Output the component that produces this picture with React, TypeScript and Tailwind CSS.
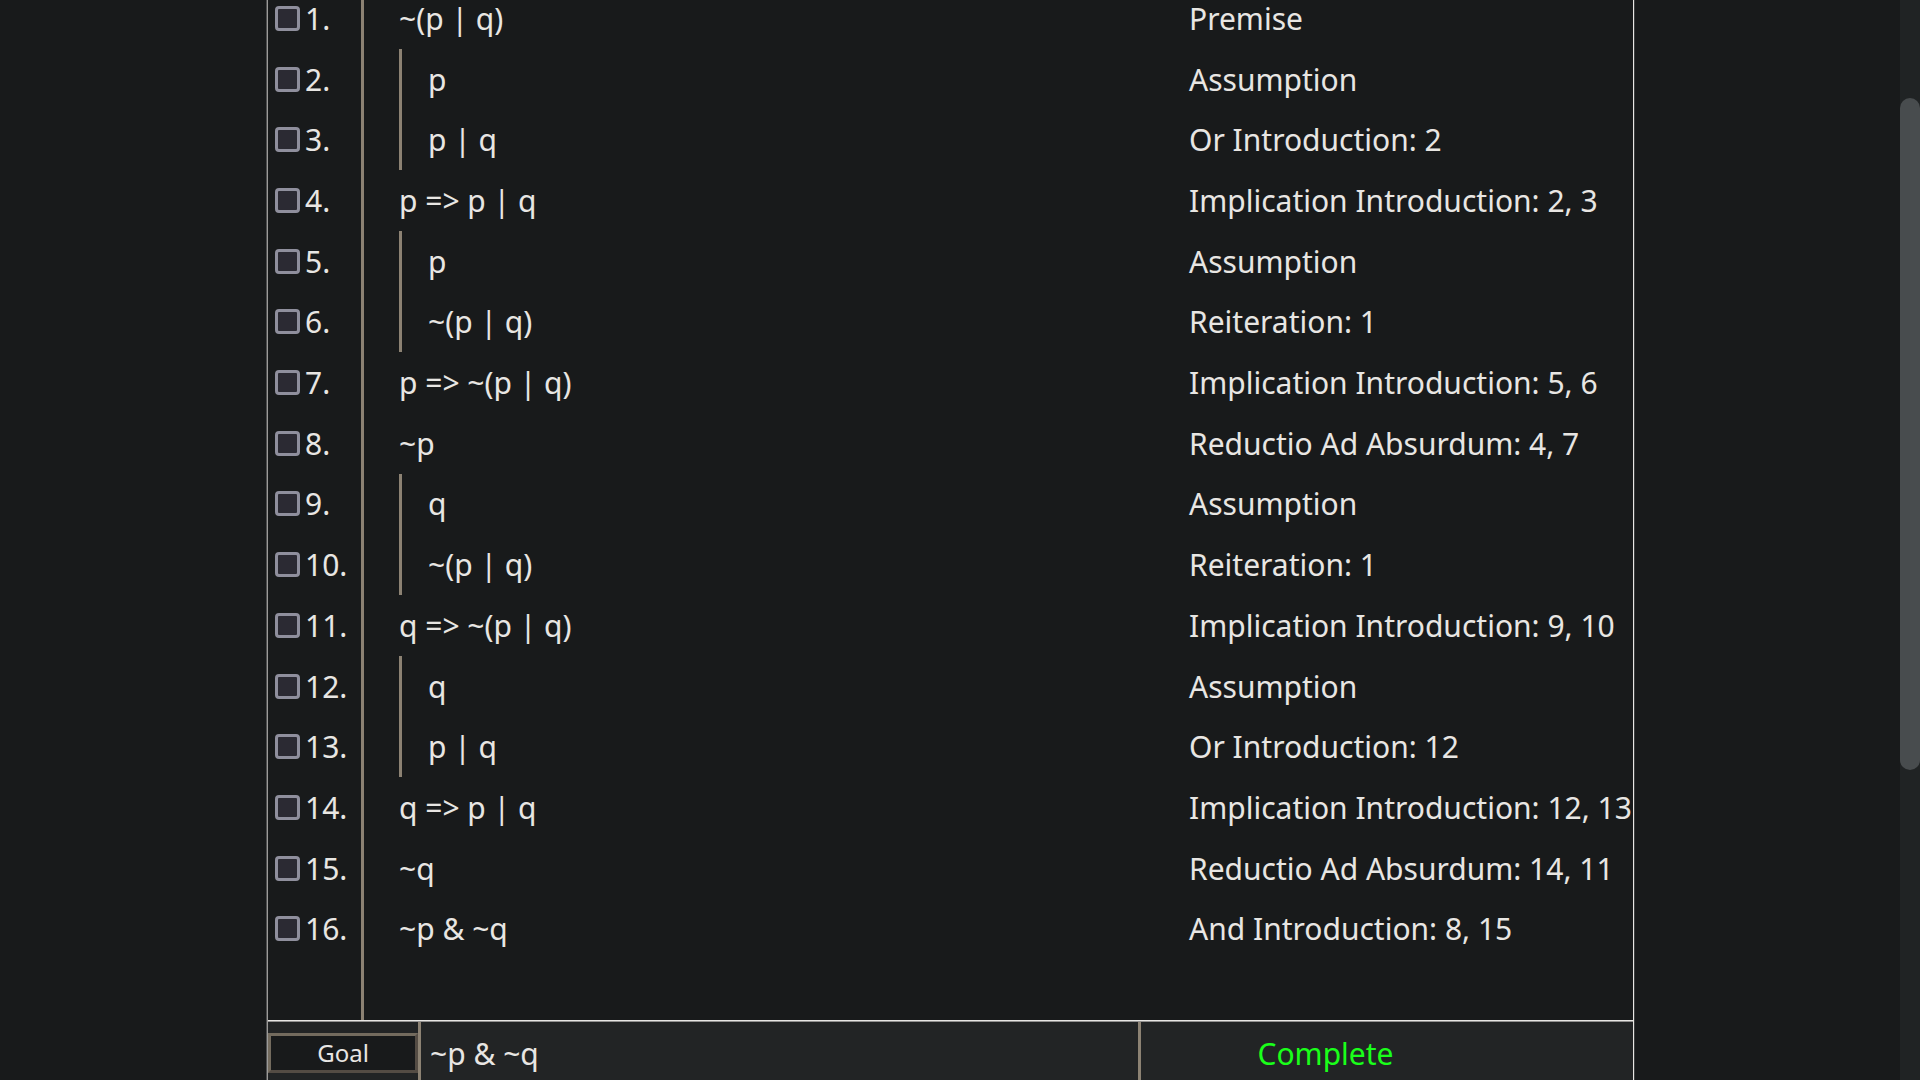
type Step = { formula: string; depth: 0 | 1; reason: string };

const steps: Step[] = [
  { formula: "~(p | q)", depth: 0, reason: "Premise" },
  { formula: "p", depth: 1, reason: "Assumption" },
  { formula: "p | q", depth: 1, reason: "Or Introduction: 2" },
  { formula: "p => p | q", depth: 0, reason: "Implication Introduction: 2, 3" },
  { formula: "p", depth: 1, reason: "Assumption" },
  { formula: "~(p | q)", depth: 1, reason: "Reiteration: 1" },
  { formula: "p => ~(p | q)", depth: 0, reason: "Implication Introduction: 5, 6" },
  { formula: "~p", depth: 0, reason: "Reductio Ad Absurdum: 4, 7" },
  { formula: "q", depth: 1, reason: "Assumption" },
  { formula: "~(p | q)", depth: 1, reason: "Reiteration: 1" },
  { formula: "q => ~(p | q)", depth: 0, reason: "Implication Introduction: 9, 10" },
  { formula: "q", depth: 1, reason: "Assumption" },
  { formula: "p | q", depth: 1, reason: "Or Introduction: 12" },
  { formula: "q => p | q", depth: 0, reason: "Implication Introduction: 12, 13" },
  { formula: "~q", depth: 0, reason: "Reductio Ad Absurdum: 14, 11" },
  { formula: "~p & ~q", depth: 0, reason: "And Introduction: 8, 15" },
];

function StepRow({ step, number }: { step: Step; number: number }) {
  return (
    <tr className="grid grid-cols-[93px_1fr_444px]">
      <td className="flex">
        <label className="flex items-center pl-[7px]">
          <input
            type="checkbox"
            className="mr-[5px] size-[25px] appearance-none rounded-[4px] border-3 border-[#8f8f9d] bg-[#2b2a33] checked:bg-[#8f8f9d]"
          />
          {number}.
        </label>
      </td>
      <td className="flex border-l-3 border-[#8c8273] pl-[35px]">
        <div
          className={
            step.depth === 1
              ? "flex items-center border-l-3 border-[#8c8273] pl-[26px]"
              : "flex items-center"
          }
        >
          {step.formula}
        </div>
      </td>
      <td className="flex items-center whitespace-nowrap">{step.reason}</td>
    </tr>
  );
}

function GoalBar() {
  return (
    <footer className="-mb-1 grid h-16 shrink-0 grid-cols-[150px_1fr_495px] border-t border-[#e8e6e3] bg-[#222425] pt-px shadow-[inset_0_1px_0_#929190]">
      <div className="flex items-center">
        <button
          type="button"
          className="h-10 w-full border-3 border-t-[#736b5e] border-r-[#544c44] border-b-[#544c44] border-l-[#736b5e] bg-[#181a1b] text-2xl leading-8"
        >
          Goal
        </button>
      </div>
      <div className="flex items-center border-l-3 border-[#8c8273] pl-[9px]">~p &amp; ~q</div>
      <div className="flex items-center border-l-3 border-[#8c8273]">
        <output className="w-3/4 text-center text-[#1aff1a]">Complete</output>
      </div>
    </footer>
  );
}

export default function App() {
  return (
    <div className="flex h-screen overflow-hidden bg-[#181a1b] font-['Noto_Sans',sans-serif] text-[30px] leading-[37px] text-[#e8e6e3]">
      <main className="flex min-w-0 flex-1 justify-center">
        <div className="flex w-[72%] border-l border-[#4f5051]">
          <div className="flex min-w-0 flex-1 flex-col border-x border-l-[#9c9b99] border-r-[#e8e6e3] shadow-[1px_0_0_#3c3e3f]">
            <table className="-mt-3 flex flex-1 flex-col">
              <tbody className="grid flex-1 auto-rows-fr">
                {steps.map((step, i) => (
                  <StepRow key={i} step={step} number={i + 1} />
                ))}
                <tr className="grid grid-cols-[93px_1fr]">
                  <td />
                  <td className="border-l-3 border-[#8c8273]" />
                </tr>
              </tbody>
            </table>
            <GoalBar />
          </div>
        </div>
      </main>
      <div className="w-5 shrink-0 bg-[#202324]">
        <div className="mt-[98px] h-[672px] rounded-full bg-[#484c4e]" />
      </div>
    </div>
  );
}
